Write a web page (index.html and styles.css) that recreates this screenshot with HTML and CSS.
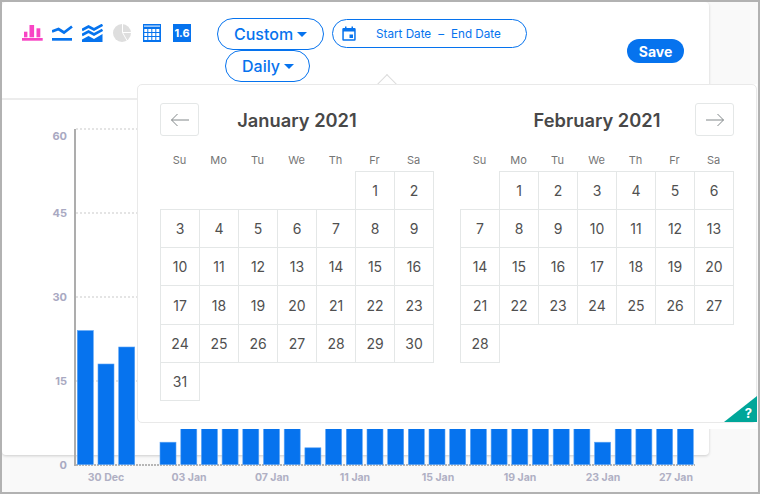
FILE: index.html
```html
<!DOCTYPE html>
<html lang="en">
<head>
<meta charset="utf-8">
<title>Chart</title>
<link rel="stylesheet" href="styles.css">
</head>
<body>
<div class="screen">
  <div class="card">
    <header class="toolbar">
      <div class="icons">
        <svg class="icon" viewBox="0 0 21 18"><g class="pink"><rect x="0" y="14" width="20.7" height="2.7"/><rect x="2" y="7.7" width="3.4" height="5.6"/><rect x="7.5" y="1" width="4.6" height="12.3"/><rect x="14.5" y="4.3" width="3.8" height="9"/></g></svg>
        <svg class="icon" viewBox="0 0 21 18"><rect class="blue" x="0" y="14" width="20" height="2.7"/><polyline class="stroke" points="0,7.5 6.5,5 12,8.5 20,2.5"/></svg>
        <svg class="icon" viewBox="0 0 21 18"><polyline class="stroke thin" points="0,6 6.5,2.5 12,5.5 20.5,0.8"/><polyline class="stroke thin" points="0,11 6.5,7.5 12,10.5 20.5,5.8"/><polygon class="blue" points="0,15.5 6.5,12 12,15 20.5,10 20.5,18 0,18"/></svg>
        <svg class="icon" viewBox="0 0 21 18"><circle class="grey" cx="10" cy="9" r="9"/><path class="cut" d="M10.5 0V8.5H19M10.5 8.5L15 16.5"/></svg>
        <svg class="icon" viewBox="0 0 21 18"><rect class="blue" x="1" y="0" width="18" height="18"/><g class="white"><rect x="2" y="1.6" width="16" height="1"/><rect x="2.3" y="5" width="3" height="3"/><rect x="6.3" y="5" width="3" height="3"/><rect x="10.3" y="5" width="3" height="3"/><rect x="14.3" y="5" width="3" height="3"/><rect x="2.3" y="9" width="3" height="3"/><rect x="6.3" y="9" width="3" height="3"/><rect x="10.3" y="9" width="3" height="3"/><rect x="14.3" y="9" width="3" height="3"/><rect x="2.3" y="13" width="3" height="3"/><rect x="6.3" y="13" width="3" height="3"/><rect x="10.3" y="13" width="3" height="3"/><rect x="14.3" y="13" width="3" height="3"/></g></svg>
        <svg class="icon" viewBox="0 0 21 18"><rect class="blue" x="1" y="0" width="18" height="18"/><text class="version" x="10" y="13">1.6</text></svg>
      </div>
      <div class="controls">
        <div class="control-row">
          <button class="pill pill-custom">Custom<span class="caret"></span></button>
          <div class="range">
            <svg class="cal-icon" viewBox="0 0 14 15"><path class="blue" d="M1.5 2H3V0.5H4.5V2H9.5V0.5H11V2H12.5A1.2 1.2 0 0 1 13.7 3.2V13.5A1.2 1.2 0 0 1 12.5 14.7H1.5A1.2 1.2 0 0 1 0.3 13.5V3.2A1.2 1.2 0 0 1 1.5 2ZM1.8 5.5V13.2H12.2V5.5ZM7.5 8.5H11V12H7.5Z" fill-rule="evenodd"/></svg>
            <span class="range-start">Start Date</span>
            <span class="range-dash">–</span>
            <span>End Date</span>
          </div>
        </div>
        <button class="pill pill-daily">Daily<span class="caret"></span></button>
      </div>
      <button class="save">Save</button>
    </header>
    <div class="plot">
      <svg class="chart" viewBox="2 100 700 390" width="700" height="390">
        <g class="gridline">
          <line x1="76" y1="129" x2="695" y2="129"/>
          <line x1="76" y1="213" x2="695" y2="213"/>
          <line x1="76" y1="297" x2="695" y2="297"/>
          <line x1="76" y1="381" x2="695" y2="381"/>
        </g>
        <line class="baseline" x1="76" y1="465" x2="695" y2="465"/>
        <line class="axis" x1="75" y1="129" x2="75" y2="466"/>
        <g class="bars">
          <rect x="77.3" y="330.6" width="16" height="134"/>
          <rect x="98" y="364" width="16" height="100.6"/>
          <rect x="118.7" y="347" width="16" height="117.6"/>
          <rect x="160" y="442.2" width="16" height="22.4"/>
          <rect x="180.8" y="400" width="16" height="64.6"/>
          <rect x="201.4" y="400" width="16" height="64.6"/>
          <rect x="222.1" y="400" width="16" height="64.6"/>
          <rect x="242.8" y="400" width="16" height="64.6"/>
          <rect x="263.5" y="400" width="16" height="64.6"/>
          <rect x="284.2" y="400" width="16" height="64.6"/>
          <rect x="304.9" y="447.8" width="16" height="16.8"/>
          <rect x="325.6" y="400" width="16" height="64.6"/>
          <rect x="346.3" y="400" width="16" height="64.6"/>
          <rect x="367" y="400" width="16" height="64.6"/>
          <rect x="387.7" y="400" width="16" height="64.6"/>
          <rect x="408.3" y="400" width="16" height="64.6"/>
          <rect x="429" y="400" width="16" height="64.6"/>
          <rect x="449.7" y="400" width="16" height="64.6"/>
          <rect x="470.4" y="400" width="16" height="64.6"/>
          <rect x="491.1" y="400" width="16" height="64.6"/>
          <rect x="511.8" y="400" width="16" height="64.6"/>
          <rect x="532.5" y="400" width="16" height="64.6"/>
          <rect x="553.2" y="400" width="16" height="64.6"/>
          <rect x="573.9" y="400" width="16" height="64.6"/>
          <rect x="594.6" y="442.2" width="16" height="22.4"/>
          <rect x="615.2" y="400" width="16" height="64.6"/>
          <rect x="635.9" y="400" width="16" height="64.6"/>
          <rect x="656.6" y="400" width="16" height="64.6"/>
          <rect x="677.3" y="400" width="16" height="64.6"/>
        </g>
        <g class="y-labels">
          <text x="67" y="140">60</text>
          <text x="67" y="217">45</text>
          <text x="67" y="301">30</text>
          <text x="67" y="385">15</text>
          <text x="67" y="469">0</text>
        </g>
        <g class="x-labels">
          <text x="106" y="481">30 Dec</text>
          <text x="189" y="481">03 Jan</text>
          <text x="272" y="481">07 Jan</text>
          <text x="355" y="481">11 Jan</text>
          <text x="438" y="481">15 Jan</text>
          <text x="520" y="481">19 Jan</text>
          <text x="603" y="481">23 Jan</text>
          <text x="676" y="481">27 Jan</text>
        </g>
      </svg>
    </div>
  </div>

  <section class="popover">
    <span class="popover-arrow"></span>
    <div class="popover-box">
      <div class="month">
        <div class="month-head">
          <button class="nav"><svg viewBox="0 0 20 14" width="20" height="14"><path d="M19 7H1.5M7.5 1L1.5 7L7.5 13"/></svg></button>
          <h2 class="month-title">January 2021</h2>
          <span class="nav-gap"></span>
        </div>
        <div class="weekdays"><span>Su</span><span>Mo</span><span>Tu</span><span>We</span><span>Th</span><span>Fr</span><span>Sa</span></div>
        <div class="days">
          <span class="day start-fr">1</span><span class="day">2</span>
          <span class="day">3</span><span class="day">4</span><span class="day">5</span><span class="day">6</span><span class="day">7</span><span class="day">8</span><span class="day">9</span>
          <span class="day">10</span><span class="day">11</span><span class="day">12</span><span class="day">13</span><span class="day">14</span><span class="day">15</span><span class="day">16</span>
          <span class="day">17</span><span class="day">18</span><span class="day">19</span><span class="day">20</span><span class="day">21</span><span class="day">22</span><span class="day">23</span>
          <span class="day">24</span><span class="day">25</span><span class="day">26</span><span class="day">27</span><span class="day">28</span><span class="day">29</span><span class="day">30</span>
          <span class="day">31</span>
        </div>
      </div>
      <div class="month">
        <div class="month-head">
          <span class="nav-gap"></span>
          <h2 class="month-title">February 2021</h2>
          <button class="nav"><svg viewBox="0 0 20 14" width="20" height="14"><path d="M1 7H18.5M12.5 1L18.5 7L12.5 13"/></svg></button>
        </div>
        <div class="weekdays"><span>Su</span><span>Mo</span><span>Tu</span><span>We</span><span>Th</span><span>Fr</span><span>Sa</span></div>
        <div class="days">
          <span class="day start-mo">1</span><span class="day">2</span><span class="day">3</span><span class="day">4</span><span class="day">5</span><span class="day">6</span>
          <span class="day">7</span><span class="day">8</span><span class="day">9</span><span class="day">10</span><span class="day">11</span><span class="day">12</span><span class="day">13</span>
          <span class="day">14</span><span class="day">15</span><span class="day">16</span><span class="day">17</span><span class="day">18</span><span class="day">19</span><span class="day">20</span>
          <span class="day">21</span><span class="day">22</span><span class="day">23</span><span class="day">24</span><span class="day">25</span><span class="day">26</span><span class="day">27</span>
          <span class="day">28</span>
        </div>
      </div>
      <button class="help"><span>?</span></button>
    </div>
  </section>
</div>
</body>
</html>
```

FILE: styles.css
```css
* { box-sizing: border-box; }
html, body { margin: 0; padding: 0; }
body { font-family: "Inter", "Liberation Sans", sans-serif; }
button { font-family: inherit; cursor: pointer; }

.screen {
  position: relative;
  width: 760px;
  height: 494px;
  overflow: hidden;
  background: #f9f9f9;
  border: 2px solid #b2b2b2;
}
.card {
  width: 707px;
  height: 453px;
  background: #fff;
  border-radius: 4px;
  box-shadow: 0 1px 3px rgba(0, 0, 0, .18);
}

.toolbar {
  display: flex;
  align-items: flex-start;
  height: 98px;
  padding: 16px 25px 0 20px;
  border-bottom: 2px solid #ececec;
}
.icons { display: flex; gap: 9px; margin-top: 6px; }
.icon { display: block; width: 21px; height: 18px; }
.pink { fill: #f844c4; }
.blue { fill: #0673ee; }
.grey { fill: #dedede; }
.white { fill: #fff; }
.stroke { fill: none; stroke: #0673ee; stroke-width: 2.7; }
.stroke.thin { stroke-width: 2.6; }
.cut { fill: none; stroke: #fff; stroke-width: 1; }
.version { fill: #fff; font-size: 11px; font-weight: 700; text-anchor: middle; }

.controls { margin-left: 24px; }
.control-row { display: flex; align-items: center; gap: 8px; }
.pill {
  display: flex;
  align-items: center;
  height: 32px;
  padding: 0 16px;
  background: #fff;
  border: 1px solid #0673ee;
  border-radius: 16px;
  color: #0673ee;
  font-size: 16px;
  font-weight: 500;
}
.pill-custom { width: 107px; }
.pill-daily { width: 85px; margin-left: 8px; }
.caret {
  width: 0;
  height: 0;
  margin-left: 4px;
  border: 5px solid transparent;
  border-top-color: #0673ee;
  border-bottom-width: 0;
}
.range {
  display: flex;
  align-items: center;
  width: 195px;
  height: 29px;
  margin-top: -1px;
  padding-left: 9px;
  border: 1px solid #0673ee;
  border-radius: 15px;
  color: #0673ee;
  font-size: 11.7px;
}
.cal-icon { width: 14px; height: 15px; margin-right: 20px; }
.range-dash { margin: 0 7px; }
.save {
  height: 24px;
  width: 57px;
  margin: 21px 0 0 auto;
  padding: 0;
  background: #0673ee;
  border: 0;
  border-radius: 12px;
  color: #fff;
  font-size: 14px;
  font-weight: 700;
}

.plot { height: 355px; }
.chart { display: block; overflow: visible; font-family: "Inter", "Liberation Sans", sans-serif; }
.gridline line { stroke: #dcdcdc; stroke-width: 1.5; stroke-dasharray: 2 2; }
.baseline { stroke: #a0a0a0; stroke-width: 1.5; stroke-dasharray: 2 1; }
.axis { stroke: #adadad; stroke-width: 2; }
.bars rect { fill: #0673ee; stroke: #5aa3f5; stroke-width: .6; }
.y-labels text { fill: #a9a9c2; font-size: 11px; font-weight: 700; text-anchor: end; }
.x-labels text { fill: #b0b0c4; font-size: 10.5px; font-weight: 700; text-anchor: middle; }

.popover {
  position: absolute;
  left: 135px;
  top: 82px;
  width: 620px;
  height: 345px;
  padding-bottom: 6px;
  background: #fff;
}
.popover-arrow {
  position: absolute;
  left: 243px;
  top: -7px;
  width: 14px;
  height: 14px;
  background: #fff;
  border: 1px solid #dcdcdc;
  border-width: 1px 0 0 1px;
  transform: rotate(45deg);
}
.popover-box {
  position: relative;
  display: flex;
  gap: 26px;
  height: 100%;
  padding: 18px 0 0 22px;
  border: 1px solid #e9e9e9;
  border-radius: 5px;
}
.month { width: 274px; }
.month-head {
  display: grid;
  grid-template-columns: 39px 1fr 39px;
  align-items: center;
  height: 33px;
}
.nav {
  display: flex;
  align-items: center;
  justify-content: center;
  width: 39px;
  height: 33px;
  padding: 0;
  background: #fff;
  border: 1px solid #e4e7e7;
  border-radius: 3px;
}
.nav path { fill: none; stroke: #82888a; stroke-width: 1; }
.month-title {
  margin: 0;
  padding-top: 2px;
  color: #484848;
  font-size: 18.3px;
  font-weight: 600;
  line-height: 31px;
  text-align: center;
}
.weekdays {
  display: grid;
  grid-template-columns: repeat(7, 39px);
  height: 21px;
  margin-top: 14px;
  color: #757575;
  font-size: 11px;
  line-height: 20px;
  text-align: center;
}
.days {
  display: grid;
  grid-template-columns: repeat(7, 39px);
  grid-auto-rows: 38.17px;
}
.day {
  display: flex;
  align-items: center;
  justify-content: center;
  margin: 0 -1px -1px 0;
  border: 1px solid #e4e7e7;
  color: #505050;
  font-size: 14px;
}
.start-fr { grid-column-start: 6; }
.start-mo { grid-column-start: 2; }
.help {
  position: absolute;
  right: -1px;
  bottom: 0;
  display: flex;
  align-items: flex-end;
  justify-content: flex-end;
  width: 33px;
  height: 26px;
  padding: 0 5px 1px 0;
  background: #00a699;
  border: 0;
  clip-path: polygon(100% 0, 100% 100%, 0 100%);
  color: #fff;
  font-size: 13px;
  font-weight: 700;
  line-height: 16px;
}
```
